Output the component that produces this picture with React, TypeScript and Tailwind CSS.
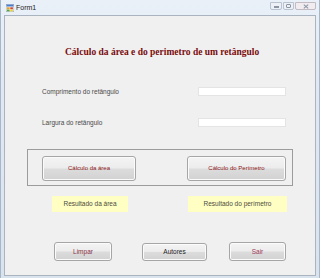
import React from "react";

const sans = "font-['Liberation_Sans',Arial,sans-serif]";

const btn =
  "flex items-center justify-center rounded-[3px] border border-[#a6a6a6] bg-[linear-gradient(#f4f4f4_0%,#ececec_48%,#dcdcdc_52%,#d2d2d2_100%)] shadow-[inset_0_0_0_1px_#fbfbfb]";

const FormIcon = () => (
  <svg width="8" height="8" viewBox="0 0 8 8" className="shrink-0">
    <rect x="0" y="0" width="8" height="8" fill="#f3f3f3" stroke="#6b7f99" strokeWidth="0.6" />
    <rect x="0.5" y="0.5" width="7" height="2" fill="#4a7cc9" />
    <rect x="1" y="3.3" width="2.6" height="2" fill="#e8a21d" />
    <rect x="4.3" y="3.3" width="2.6" height="2" fill="#d8402c" />
    <rect x="1" y="5.6" width="2.6" height="1.8" fill="#5aa43a" />
    <rect x="4.3" y="5.6" width="2.6" height="1.8" fill="#f0cf2a" />
  </svg>
);

const CaptionButtons = () => (
  <div className="flex items-start gap-[1px] pt-[2px]">
    <div className="flex h-[8px] w-[12px] items-end justify-center rounded-b-[2px] border border-[#b8c2d0] bg-[#edf1f6] pb-[1px]">
      <div className="h-[2px] w-[5px] border border-[#8c95a3]" />
    </div>
    <div className="flex h-[8px] w-[11px] items-center justify-center rounded-b-[2px] border border-[#b8c2d0] bg-[#edf1f6]">
      <div className="h-[4px] w-[5px] rounded-[1px] border border-[#8c95a3]" />
    </div>
    <div className="flex h-[8px] w-[21px] items-center justify-center rounded-b-[2px] border border-[#c4bac2] bg-[#f0ecf0]">
      <svg width="6" height="5" viewBox="0 0 6 5">
        <path d="M0.8 0.6 L5.2 4.4 M5.2 0.6 L0.8 4.4" stroke="#8c95a3" strokeWidth="1.1" />
      </svg>
    </div>
  </div>
);

export default function App() {
  return (
    <div className="h-[278px] w-[320px] overflow-hidden border-x border-[#a8b7c8] bg-[linear-gradient(180deg,#e9f0f8_0%,#e0e9f3_30%,#d9e3ee_100%)]">
      {/* title bar */}
      <div className="flex h-[15px] items-start justify-between pl-[5px] pr-[3px]">
        <div className="flex items-center gap-[2px] pt-[4px]">
          <FormIcon />
          <span className={`${sans} text-[7px] leading-[8px] text-[#1e1e1e]`}>Form1</span>
        </div>
        <CaptionButtons />
      </div>

      {/* client area */}
      <div className="mx-[3px] h-[261px] border border-[#aab4c0] bg-[#f0f0f0]">
        <div className="flex flex-col">
          <div className="mt-[30px] ml-[60px] h-[12px] font-['Liberation_Serif',serif] text-[9.5px] leading-[12px] font-bold text-[#7a0c0c]">
            Cálculo da área e do perimetro de um retângulo
          </div>

          <div className={`${sans} mt-[29px] ml-[37px] flex h-[9px] items-center`}>
            <span className="w-[156px] text-[6.5px] text-[#4a4a4a]">Comprimento do retângulo</span>
            <div className="h-[9px] w-[88px] border border-[#e4e4e4] bg-white" />
          </div>

          <div className={`${sans} mt-[22px] ml-[37px] flex h-[9px] items-center`}>
            <span className="w-[156px] text-[6.5px] text-[#4a4a4a]">Largura do retângulo</span>
            <div className="h-[9px] w-[88px] border border-[#e4e4e4] bg-white" />
          </div>

          <div className="mt-[22px] ml-[22px] flex h-[37px] w-[266px] gap-[51px] border border-[#9c9c9c] pt-[6px] pl-[14px]">
            <div className={`${btn} h-[25px] w-[94px]`}>
              <span className={`${sans} text-[6px] text-[#8b1414]`}>Cálculo da área</span>
            </div>
            <div className={`${btn} h-[25px] w-[99px]`}>
              <span className={`${sans} text-[6px] text-[#8b1414]`}>Cálculo do Perímetro</span>
            </div>
          </div>

          <div className={`${sans} mt-[10px] ml-[47px] flex gap-[60px]`}>
            <div className="flex h-[16px] w-[76px] items-center justify-center bg-[#ffffc4] text-[6.5px] text-[#4b4b40]">
              Resultado da área
            </div>
            <div className="flex h-[16px] w-[99px] items-center justify-center bg-[#ffffc4] text-[6.5px] text-[#4b4b40]">
              Resultado do perímetro
            </div>
          </div>

          <div className={`${sans} mt-[30px] ml-[49px] flex items-end`}>
            <div className={`${btn} h-[19px] w-[58px]`}>
              <span className="text-[6.5px] text-[#8a3344]">Limpar</span>
            </div>
            <div className={`${btn} ml-[30px] h-[18px] w-[65px]`}>
              <span className="text-[6.5px] text-[#222]">Autores</span>
            </div>
            <div className={`${btn} ml-[22px] h-[19px] w-[57px]`}>
              <span className="text-[6.5px] text-[#a0405a]">Sair</span>
            </div>
          </div>
        </div>
      </div>
    </div>
  );
}
